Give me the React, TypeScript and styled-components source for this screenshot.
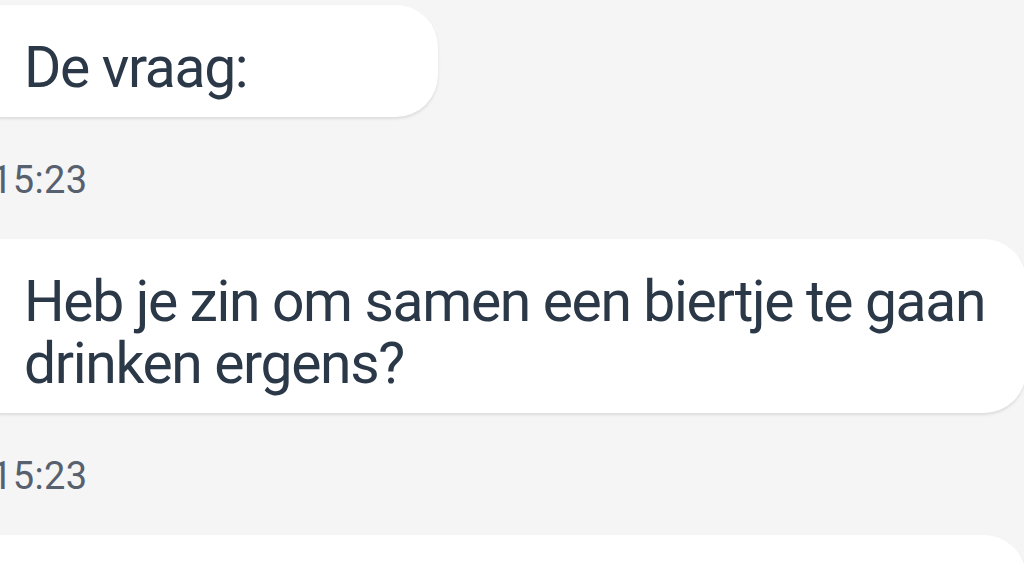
import styled, { createGlobalStyle } from 'styled-components'

const GlobalStyle = createGlobalStyle`
  html, body {
    margin: 0;
    padding: 0;
    background: #f5f5f5;
    overflow: hidden;
  }
`

interface Message {
  id: number
  text: string
  time?: string
  width?: number
}

const messages: Message[] = [
  { id: 1, text: 'De vraag:', time: '15:23', width: 478 },
  { id: 2, text: 'Heb je zin om samen een biertje te gaan drinken ergens?', time: '15:23', width: 1066 },
  { id: 3, text: '', width: 1066 },
]

const App = () => {
  return (
    <>
      <GlobalStyle />
      <Chat>
        {messages.map((m) => (
          <Entry key={m.id}>
            <Bubble $width={m.width}>{m.text}</Bubble>
            {m.time && <Time>{m.time}</Time>}
          </Entry>
        ))}
      </Chat>
    </>
  )
}

const Chat = styled.div`
  display: flex;
  flex-direction: column;
  width: 1100px;
  height: 576px;
  margin-left: -40px;
  padding-top: 5px;
  overflow: hidden;
  font-family: Roboto, 'Noto Sans', sans-serif;
`

const Entry = styled.div`
  display: flex;
  flex-direction: column;
  align-items: flex-start;
`

const Bubble = styled.div<{ $width?: number }>`
  box-sizing: border-box;
  width: ${({ $width }) => ($width ? `${$width}px` : 'auto')};
  min-height: 112px;
  padding: 32px 30px 18px 64px;
  background: #ffffff;
  border-radius: 42px;
  box-shadow: 0 2px 3px rgba(0, 0, 0, 0.1);
  color: #2b3848;
  font-size: 57px;
  line-height: 62px;
  letter-spacing: -1.35px;
`

const Time = styled.div`
  margin: 44px 0 40px 31px;
  color: #56606e;
  font-size: 38px;
  line-height: 38px;
  letter-spacing: 0.4px;
`

export default App
